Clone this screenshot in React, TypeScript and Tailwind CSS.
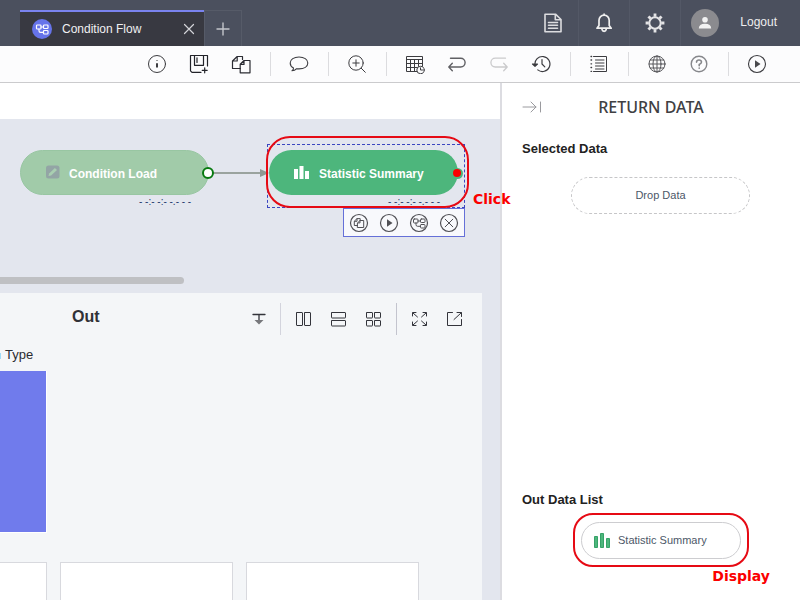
import type { ReactNode } from "react";

type IconProps = { size?: number; color?: string; width?: number; children: ReactNode };

function Icon({ size = 20, color = "#3c3c40", width = 1, children }: IconProps) {
  return (
    <svg
      width={size}
      height={size}
      viewBox={`0 0 ${size} ${size}`}
      fill="none"
      stroke={color}
      strokeWidth={width}
      strokeLinecap="round"
      strokeLinejoin="round"
      aria-hidden="true"
      className="shrink-0"
    >
      {children}
    </svg>
  );
}

const FlowShapes = () => (
  <>
    <rect x="4.5" y="6" width="4.5" height="4" rx="0.8" />
    <rect x="11.5" y="6" width="4.5" height="3.5" rx="0.8" />
    <rect x="11.5" y="11.5" width="4.5" height="3.5" rx="0.8" />
    <path d="M9 8h2.5M7 10v1.7q0 1.6 1.6 1.6h2.9" />
  </>
);

const CopyIcon = () => (
  <Icon color="#2b2c33" width={1.2}>
    <path d="M9.3 14.5H1.5V7l4.7-4.5h5.3v3M6.2 2.8V7H1.7" />
    <path d="M9.2 10.2 13 6.5h6v12.3H9.2zM13 6.8v3.6H9.4" />
  </Icon>
);

const SmallCopy = () => (
  <>
    <path d="M8.6 12.5H5.3V8.2L8 5.6h3.2v1.8M8 5.8v2.5H5.5" />
    <path d="M8.7 9.8 11 7.5h3.7v7H8.7zM11 7.7v2.2H8.8" />
  </>
);

function ToolButton({ label, children }: { label: string; children: ReactNode }) {
  return (
    <button type="button" aria-label={label} className="flex h-9 w-[42px] shrink-0 items-center justify-center">
      {children}
    </button>
  );
}

const ToolDivider = () => <span className="mr-[7px] ml-2 h-6 w-px shrink-0 bg-[#dcdcdf]" />;

function TopBar() {
  return (
    <header className="flex h-[46px] shrink-0 items-end bg-[#4b505e] pl-5">
      <div className="flex h-9 w-[184px] items-center border-t-2 border-[#7a83ee] bg-[#383941] pr-[7px] pl-3">
        <span className="flex size-5 items-center justify-center rounded-full bg-[#6674ea]">
          <Icon color="#fff" width={1.2}>
            <FlowShapes />
          </Icon>
        </span>
        <span className="ml-2.5 flex-1 text-xs text-[#f0f0f2]">Condition Flow</span>
        <button type="button" aria-label="Close tab" className="flex size-4 items-center justify-center">
          <Icon size={12} color="#d3d4d8" width={1.2}>
            <path d="M1.5 1.5l9 9M10.5 1.5l-9 9" />
          </Icon>
        </button>
      </div>
      <button
        type="button"
        aria-label="New tab"
        className="flex h-9 w-[38px] items-center justify-center border border-b-0 border-[#565b68]"
      >
        <Icon size={14} color="#c3c5cb" width={1.4}>
          <path d="M7 1v12M1 7h12" />
        </Icon>
      </button>
      <div className="ml-auto flex h-full items-center text-[#eeeeee]">
        <button type="button" aria-label="Documents" className="flex h-full w-[51px] items-center justify-center border-r border-[#535866]">
          <Icon size={22} color="#dcdcdf" width={1.6}>
            <path d="M3 2.2h10.5l5.5 5.3v12.3H3zM13.3 2.5v5.2H19M6.5 10.5h9M6.5 13.3h9M6.5 16.2h9" />
          </Icon>
        </button>
        <button type="button" aria-label="Notifications" className="flex h-full w-[51px] items-center justify-center border-r border-[#535866]">
          <Icon size={22} color="#f0f0f0" width={1.7}>
            <path d="M4 16.2h14.2l-2-2.8V8.2a5.1 5.1 0 0 0-10.2 0v5.2zM9 17.5q.4 1.8 2.1 1.8t2.1-1.8M11.1 2.2v.8" />
          </Icon>
        </button>
        <button type="button" aria-label="Settings" className="flex h-full w-[51px] items-center justify-center border-r border-[#535866]">
          <Icon size={22} color="#e4e4e6" width={2}>
            <circle cx="11" cy="11" r="5.7" />
            <g strokeWidth="2.8" strokeLinecap="butt">
              <path d="M11 1.6v3.2M11 17.2v3.2M1.6 11h3.2M17.2 11h3.2M4.4 4.4l2.2 2.2M15.4 15.4l2.2 2.2M17.6 4.4l-2.2 2.2M6.6 15.4l-2.2 2.2" />
            </g>
          </Icon>
        </button>
        <span className="ml-2.5 flex size-7 items-center justify-center rounded-full bg-[#8b8b8f]">
          <Icon size={14} color="none">
            <circle cx="7" cy="3.8" r="2.8" fill="#f2f2f2" />
            <path d="M.8 12.5q0-4.7 6.2-4.7t6.2 4.7z" fill="#f2f2f2" />
          </Icon>
        </span>
        <button type="button" className="mr-[23px] ml-[21px] pb-0.5 text-xs">
          Logout
        </button>
      </div>
    </header>
  );
}

function Toolbar() {
  return (
    <div
      role="toolbar"
      aria-label="Flow tools"
      className="flex h-[37px] shrink-0 items-center justify-end border-b border-[#cbcbcd] bg-[#fcfcfd] pr-[22px]"
    >
      <ToolButton label="Information">
        <Icon>
          <circle cx="10" cy="10" r="8.5" />
          <path d="M10 9.3v4.2M10 6.3v.5" strokeWidth="2" strokeLinecap="butt" />
        </Icon>
      </ToolButton>
      <ToolButton label="Save as">
        <Icon color="#222329" width={1.2}>
          <path d="M12 18.3H3L1.5 16.8V1.5h17V12M5.5 1.7v9.6h9V1.7M8 3.8v4.6M15.7 13.8v5M13.2 16.3h5" />
        </Icon>
      </ToolButton>
      <ToolButton label="Copy">
        <CopyIcon />
      </ToolButton>
      <ToolDivider />
      <ToolButton label="Comment">
        <Icon width={1.1}>
          <path d="M4.5 14Q1.2 12.2 1.2 9C1.2 5.3 5 3 10 3s8.8 2.3 8.8 6-3.8 5.9-8.8 5.9q-1.2 0-2.4-.2Q5.8 16.8 3 16.8 4.7 15.7 4.5 14z" />
        </Icon>
      </ToolButton>
      <ToolDivider />
      <ToolButton label="Zoom in">
        <Icon>
          <circle cx="9" cy="9" r="7.2" />
          <path d="M14.3 14.3l4 4M9 5.8v6.4M5.8 9h6.4" />
        </Icon>
      </ToolButton>
      <ToolDivider />
      <ToolButton label="Schedule">
        <Icon>
          <path d="M12 17.5H1.5v-15h16v10M1.5 5.5h16M1.5 9.5h16M1.5 13.5h11M5.5 5.5v12M9.5 5.5v12M13.5 5.5v7" />
          <circle cx="15.5" cy="16" r="3.7" fill="#fcfcfd" />
          <path d="M15.5 13.8V16h2" />
        </Icon>
      </ToolButton>
      <ToolButton label="Undo">
        <Icon color="#606064" width={1.4}>
          <path d="M3.5 4.2h10.2a4.4 4.4 0 0 1 0 8.8H2M5.3 9.3 1.8 13l3.5 3.7" />
        </Icon>
      </ToolButton>
      <ToolButton label="Redo">
        <Icon color="#cacacc" width={1.3}>
          <path d="M16.5 4.2H6.3a4.4 4.4 0 0 0 0 8.8H18M14.7 9.3l3.5 3.7-3.5 3.7" />
        </Icon>
      </ToolButton>
      <ToolButton label="History">
        <Icon width={1.2}>
          <path d="M4 11a7.5 7.5 0 1 1 2.8 4.9M11 5.5V10l2.8 2.8" />
          <path d="M1.5 10h5L4 12.3z" fill="#3c3c40" />
        </Icon>
      </ToolButton>
      <ToolDivider />
      <ToolButton label="List">
        <Icon>
          <path d="M4.5 2.5h13v15h-13M6.5 6h8.5M6.5 9h8.5M6.5 12h8.5M6.5 15h8.5" />
          <path d="M2 2.5h.6M2 6h.6M2 9.8h.6M2 13.5h.6M2 17.3h.6" strokeWidth="1.3" />
        </Icon>
      </ToolButton>
      <ToolDivider />
      <ToolButton label="Language">
        <Icon color="#58585c">
          <circle cx="10" cy="10" r="8" />
          <ellipse cx="10" cy="10" rx="4" ry="8" />
          <path d="M10 2v16M2 10h16M3.2 6h13.6M3.2 14h13.6" />
        </Icon>
      </ToolButton>
      <ToolButton label="Help">
        <Icon color="#86878b" width={1.4}>
          <circle cx="10" cy="10" r="7.8" />
          <path d="M7.5 8.1Q7.7 6 10 6t2.5 2Q12.5 9.5 10.2 10.5v1.2M10.2 14v.2" strokeWidth="1.6" />
        </Icon>
      </ToolButton>
      <ToolDivider />
      <ToolButton label="Run">
        <Icon width={1.1}>
          <circle cx="10" cy="10" r="8.5" />
          <path d="M8 6.3v7.4l5.5-3.7z" fill="#4a4a4d" stroke="none" />
        </Icon>
      </ToolButton>
    </div>
  );
}

function NodeAction({ label, children }: { label: string; children: ReactNode }) {
  return (
    <button type="button" aria-label={label} className="flex size-5 items-center justify-center">
      <Icon color="#505055">
        <circle cx="10" cy="10" r="8.5" strokeWidth="1.2" />
        {children}
      </Icon>
    </button>
  );
}

function FlowCanvas() {
  return (
    <section aria-label="Flow canvas" className="relative h-[174px] shrink-0 bg-[#e3e6ee]">
      <div className="absolute top-[53px] left-[209px] h-0.5 w-[53px] bg-[#9aa39e]" />
      <svg className="absolute top-[49px] left-[260px]" width="9" height="10" viewBox="0 0 9 10" aria-hidden="true">
        <path d="M0 1l9 4-9 4z" fill="#8f9893" />
      </svg>

      <div className="absolute top-[31px] left-5 flex h-[45px] w-[189px] items-center rounded-full border border-[#98c6a2] bg-[#a1cba9] pl-6">
        <Icon size={15} color="none">
          <rect x="1" y="0.5" width="13.5" height="13" rx="2.5" fill="#93a5a5" />
          <path d="M3.5 11l.6-2.6 5.8-5.5 2.1 2-5.9 5.5z" fill="#a9cfb1" />
        </Icon>
        <span className="ml-[9px] pt-0.5 text-xs font-bold text-white">Condition Load</span>
      </div>
      <span className="absolute top-[48px] left-[202px] size-3 rounded-full border-2 border-[#087a10] bg-white" />
      <span className="absolute top-[77px] left-[139px] text-[10px] leading-3 whitespace-nowrap text-[#1e3a6c]">- -:- -:- -.- - -</span>

      <div className="absolute top-[25px] left-[267px] h-16 w-[198px] border border-dashed border-[#3b46c0]" />
      <div className="absolute top-[31px] left-[269px] flex h-[45px] w-[189px] items-center rounded-full bg-[#4db67c] pl-[25px]">
        <svg width="15" height="14" viewBox="0 0 15 14" fill="#fff" aria-hidden="true">
          <path d="M0 3h4v10H0zM5.5 0h4v13h-4zM11 5h4v8h-4z" />
        </svg>
        <span className="ml-[10px] pt-0.5 text-xs font-bold text-white">Statistic Summary</span>
      </div>
      <span className="absolute top-[49px] left-[452px] size-[11px] rounded-full bg-[#4db67c]" />
      <span className="absolute top-[50px] left-[453px] size-2 rounded-full bg-[#fb0000]" />
      <span className="absolute top-[77px] left-[388px] text-[10px] leading-3 whitespace-nowrap text-[#1e3a6c]">- -:- -:- -.- - -</span>

      <div className="absolute top-[89px] left-[343px] flex h-[29px] w-[122px] items-center justify-center gap-2.5 border border-[#6570d8] bg-[#f8f9fc]">
        <NodeAction label="Copy node">
          <SmallCopy />
        </NodeAction>
        <NodeAction label="Run node">
          <path d="M8 6.3v7.4l5.5-3.7z" fill="#505055" stroke="none" />
        </NodeAction>
        <NodeAction label="Open flow">
          <FlowShapes />
        </NodeAction>
        <NodeAction label="Delete node">
          <path d="M6.2 6.2l7.6 7.6M13.8 6.2l-7.6 7.6" />
        </NodeAction>
      </div>

      <div className="absolute top-[17px] left-[266px] h-[72px] w-[203px] rounded-[24px] border-2 border-[#e60a14]" />
      <span className="absolute top-[71px] left-[473px] z-10 font-['DejaVu_Sans',sans-serif] text-sm leading-[18px] font-bold text-[#fb0000]">
        Click
      </span>
      <div className="absolute top-[158px] left-0 h-[7px] w-[184px] rounded-r-full bg-[#bfc0c3]" />
    </section>
  );
}

function PanelButton({ label, children }: { label: string; children: ReactNode }) {
  return (
    <button type="button" aria-label={label} className="flex h-8 w-[35px] items-center justify-center">
      <Icon size={18} color="#33343b">
        {children}
      </Icon>
    </button>
  );
}

function OutPanel() {
  return (
    <section aria-label="Out" className="mr-[18px] flex min-h-0 flex-1 flex-col overflow-hidden bg-[#f4f6f8]">
      <div className="flex h-[52px] shrink-0 items-center pr-2.5 pl-[72px]">
        <h2 className="mr-auto pb-1 text-base font-bold text-[#303136]">Out</h2>
        <PanelButton label="Collapse">
          <path d="M3 4.5h12M9 4.5v8" strokeWidth="1.3" />
          <path d="M4.5 10h9L9 14.5z" fill="#77787c" stroke="none" />
        </PanelButton>
        <span className="mr-[5px] ml-1 h-8 w-px bg-[#d3d4dd]" />
        <PanelButton label="Two columns">
          <rect x="1.5" y="2.5" width="6" height="13" rx="0.5" />
          <rect x="9.5" y="2.5" width="6" height="13" rx="0.5" />
        </PanelButton>
        <PanelButton label="Two rows">
          <rect x="1.5" y="2.5" width="14" height="5.5" rx="0.5" />
          <rect x="1.5" y="10.5" width="14" height="5.5" rx="0.5" />
        </PanelButton>
        <PanelButton label="Grid">
          <rect x="1.5" y="2.5" width="6" height="5.5" rx="0.5" />
          <rect x="9.5" y="2.5" width="6" height="5.5" rx="0.5" />
          <rect x="1.5" y="10.5" width="6" height="5.5" rx="0.5" />
          <rect x="9.5" y="10.5" width="6" height="5.5" rx="0.5" />
        </PanelButton>
        <span className="mr-[5px] ml-[5px] h-8 w-px bg-[#c3c4ce]" />
        <PanelButton label="Full screen">
          <path d="M5 2.5H1.5V6M12 2.5h3.5V6M5 15.5H1.5V12M12 15.5h3.5V12M2 3l4.5 4M15 3l-4.5 4M2 15l4.5-4M15 15l-4.5-4" />
        </PanelButton>
        <PanelButton label="Open in new window">
          <path d="M6.5 2.5h-5v13h14V9.5M11 2.5h4.5V6.5M15.2 2.8 8 9.5" />
        </PanelButton>
      </div>
      <div className="flex h-[26px] shrink-0 items-end gap-1 pb-2">
        <span className="mb-1 h-1.5 w-px bg-[#9fdcf8]" />
        <span className="text-[13px] leading-4 text-[#2b2c31]">Type</span>
      </div>
      <div className="h-[162px] w-[47px] shrink-0 border-r border-b border-white bg-[#707bec]" />
      <div className="mt-[29px] flex h-[60px] shrink-0 justify-end gap-[13px] pr-[63px]">
        <div className="w-[173px] shrink-0 border border-[#d8d9de] bg-white" />
        <div className="w-[173px] shrink-0 border border-[#d8d9de] bg-white" />
        <div className="w-[173px] shrink-0 border border-[#d8d9de] bg-white" />
      </div>
    </section>
  );
}

function ReturnData() {
  return (
    <aside className="flex w-[300px] shrink-0 flex-col border-l-2 border-[#dcdce1] bg-white">
      <div className="flex h-12 items-center pl-5">
        <button type="button" aria-label="Close panel" className="flex size-5 items-center justify-center">
          <Icon color="#9a9a9e">
            <path d="M1 10h13M9 5l5 5-5 5M18.5 5v10" />
          </Icon>
        </button>
        <h1 className="flex-1 pr-10 text-center font-['Noto_Sans',sans-serif] text-base font-medium text-[#404043]">
          RETURN DATA
        </h1>
      </div>
      <section className="pt-[9px]">
        <h2 className="pl-5 text-[13px] leading-[18px] font-bold text-[#222]">Selected Data</h2>
        <div className="mt-[19px] mr-[50px] ml-auto flex h-[37px] w-[179px] items-center justify-center rounded-full border border-dashed border-[#c6c6c8] text-[11px] text-[#4c5768]">
          Drop Data
        </div>
      </section>
      <section className="mt-auto pb-3">
        <h2 className="pl-5 text-[13px] leading-[18px] font-bold text-[#222]">Out Data List</h2>
        <div className="mt-1 mr-[51px] ml-auto flex h-[54px] w-[176px] items-center justify-center rounded-[20px] border-2 border-[#e60a14]">
          <button
            type="button"
            className="flex h-[37px] w-[160px] items-center rounded-full border border-[#cdcdd0] pl-3 text-[11px] text-[#4c5768]"
          >
            <svg width="17" height="15" viewBox="0 0 17 15" fill="#4db67c" stroke="#36a268" aria-hidden="true">
              <path d="M.5 3.5h3v11h-3zM6.5.5h3v14h-3zM12.5 5.5h3v9h-3z" />
            </svg>
            <span className="ml-[7px]">Statistic Summary</span>
          </button>
        </div>
        <p className="pr-[30px] pb-[3px] text-right font-['DejaVu_Sans',sans-serif] text-sm leading-[18px] font-bold text-[#fb0000]">
          Display
        </p>
      </section>
    </aside>
  );
}

export default function App() {
  return (
    <div className="flex h-screen flex-col overflow-hidden bg-white font-['Liberation_Sans',Arial,sans-serif]">
      <TopBar />
      <Toolbar />
      <div className="flex min-h-0 flex-1">
        <main className="flex min-w-0 flex-1 flex-col bg-[#e3e6ee]">
          <div className="h-9 shrink-0 bg-white" />
          <FlowCanvas />
          <OutPanel />
        </main>
        <ReturnData />
      </div>
    </div>
  );
}
